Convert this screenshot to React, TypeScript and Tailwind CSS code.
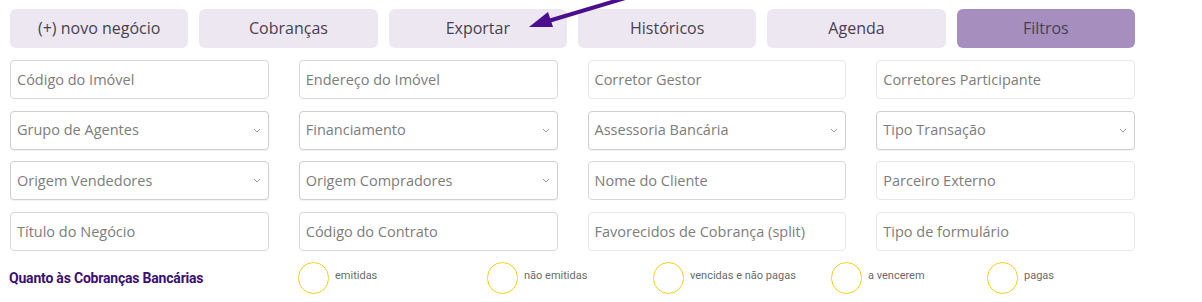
import React from "react";

const buttons = ["(+) novo negócio", "Cobranças", "Exportar", "Históricos", "Agenda", "Filtros"];

type Field = { label: string; select?: boolean; light?: boolean };
const fields: Field[] = [
  { label: "Código do Imóvel" },
  { label: "Endereço do Imóvel" },
  { label: "Corretor Gestor", light: true },
  { label: "Corretores Participante", light: true },
  { label: "Grupo de Agentes", select: true },
  { label: "Financiamento", select: true },
  { label: "Assessoria Bancária", select: true },
  { label: "Tipo Transação", select: true },
  { label: "Origem Vendedores", select: true },
  { label: "Origem Compradores", select: true },
  { label: "Nome do Cliente" },
  { label: "Parceiro Externo", light: true },
  { label: "Título do Negócio" },
  { label: "Código do Contrato" },
  { label: "Favorecidos de Cobrança (split)", light: true },
  { label: "Tipo de formulário", light: true },
];

const options = [
  { label: "emitidas", w: "w-[189px]" },
  { label: "não emitidas", w: "w-[166px]" },
  { label: "vencidas e não pagas", w: "w-[178px]" },
  { label: "a vencerem", w: "w-[156px]" },
  { label: "pagas", w: "w-[156px]" },
];

function Chevron() {
  return (
    <svg width="8" height="5" viewBox="0 0 8 5" fill="none" className="shrink-0">
      <path d="M1 1l3 3 3-3" stroke="#9a9a9a" strokeWidth="1" />
    </svg>
  );
}

export default function App() {
  return (
    <div className="relative w-[1202px] h-[302px] bg-white pl-[10px] pt-[9px] font-['Open_Sans',sans-serif] overflow-hidden">
      <div className="grid grid-cols-6 w-[1125px] gap-x-[11px]">
        {buttons.map((b, i) => (
          <div
            key={b}
            className={`h-[39px] rounded-[6px] flex items-center justify-center pb-px text-[16px] text-[#47414f] ${
              i === 5 ? "bg-[#a68fbf]" : "bg-[#ede7f2]"
            }`}
          >
            {b}
          </div>
        ))}
      </div>

      <div className="grid grid-cols-4 w-[1125px] gap-x-[30px] gap-y-[11.7px] mt-[12px]">
        {fields.map((f) => (
          <div
            key={f.label}
            className={`h-[39px] rounded-[4px] border bg-white flex items-center justify-between pl-[6px] pr-[7px] text-[14.5px] text-[#7d7d7d] ${
              f.select
                ? "border-[#cfcfcf] shadow-[0_1px_1px_rgba(0,0,0,0.06)]"
                : f.light
                ? "border-[#e8e8e8]"
                : "border-[#d8d8d8]"
            }`}
          >
            <span>{f.label}</span>
            {f.select && <Chevron />}
          </div>
        ))}
      </div>

      <div className="flex items-center mt-[10px] h-[33px]">
        <div className="w-[289px] -ml-px pt-[2px] font-['Roboto',sans-serif] font-bold text-[14px] text-[#3a0f73] tracking-[-0.2px]">
          Quanto às Cobranças Bancárias
        </div>
        {options.map((o) => (
          <div key={o.label} className={`flex items-center ${o.w}`}>
            <div className="w-[31px] h-[32px] rounded-full border border-[#f9cf1c] shrink-0" />
            <span className="ml-[6px] font-['Roboto',sans-serif] text-[11px] text-[#6a6a6a] -mt-[3px]">
              {o.label}
            </span>
          </div>
        ))}
      </div>

      <svg className="absolute left-0 top-0 pointer-events-none" width="1202" height="302">
        <line x1="632" y1="-4" x2="545" y2="22" stroke="#4a0e8e" strokeWidth="4" />
        <polygon points="529,27 548,12 553,27" fill="#4a0e8e" />
      </svg>
    </div>
  );
}
